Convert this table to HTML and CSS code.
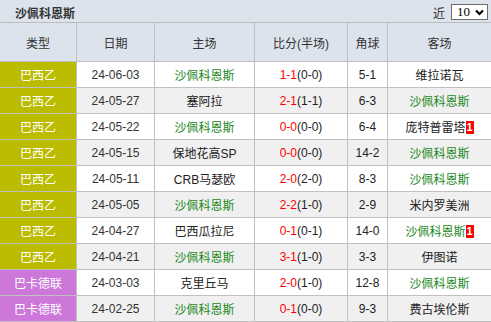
FILE: index.html
```html
<!DOCTYPE html>
<html lang="zh">
<head>
<meta charset="utf-8">
<link rel="stylesheet" href="styles.css">
</head>
<body>
<div class="panel">
  <div class="titlebar">
    <span class="title">沙佩科恩斯</span>
    <span class="recent">近
      <span class="sel">10<svg class="chev" width="9" height="7" viewBox="0 0 9 7"><path d="M1 1.5 L4.5 5 L8 1.5" fill="none" stroke="#000" stroke-width="2.2"/></svg></span>
    </span>
  </div>
  <table class="games">
    <thead>
      <tr>
        <th class="c1">类型</th><th class="c2">日期</th><th class="c3">主场</th><th class="c4">比分(半场)</th><th class="c5">角球</th><th class="c6">客场</th>
      </tr>
    </thead>
    <tbody>
      <tr><td class="lg b">巴西乙</td><td class="d">24-06-03</td><td class="g">沙佩科恩斯</td><td><span class="s">1-1</span>(0-0)</td><td>5-1</td><td>维拉诺瓦</td></tr>
      <tr class="alt"><td class="lg b">巴西乙</td><td class="d">24-05-27</td><td>塞阿拉</td><td><span class="s">2-1</span>(1-1)</td><td>6-3</td><td class="g">沙佩科恩斯</td></tr>
      <tr><td class="lg b">巴西乙</td><td class="d">24-05-22</td><td class="g">沙佩科恩斯</td><td><span class="s">0-0</span>(0-0)</td><td>6-4</td><td>庞特普雷塔<span class="card">1</span></td></tr>
      <tr class="alt"><td class="lg b">巴西乙</td><td class="d">24-05-15</td><td>保地花高SP</td><td><span class="s">0-0</span>(0-0)</td><td>14-2</td><td class="g">沙佩科恩斯</td></tr>
      <tr><td class="lg b">巴西乙</td><td class="d">24-05-11</td><td>CRB马瑟欧</td><td><span class="s">2-0</span>(2-0)</td><td>8-3</td><td class="g">沙佩科恩斯</td></tr>
      <tr class="alt"><td class="lg b">巴西乙</td><td class="d">24-05-05</td><td class="g">沙佩科恩斯</td><td><span class="s">2-2</span>(1-0)</td><td>2-9</td><td>米内罗美洲</td></tr>
      <tr><td class="lg b">巴西乙</td><td class="d">24-04-27</td><td>巴西瓜拉尼</td><td><span class="s">0-1</span>(0-1)</td><td>14-0</td><td class="g">沙佩科恩斯<span class="card">1</span></td></tr>
      <tr class="alt"><td class="lg b">巴西乙</td><td class="d">24-04-21</td><td class="g">沙佩科恩斯</td><td><span class="s">3-1</span>(1-0)</td><td>3-3</td><td>伊图诺</td></tr>
      <tr><td class="lg p">巴卡德联</td><td class="d">24-03-03</td><td>克里丘马</td><td><span class="s">2-0</span>(1-0)</td><td>12-8</td><td class="g">沙佩科恩斯</td></tr>
      <tr class="alt"><td class="lg p">巴卡德联</td><td class="d">24-02-25</td><td class="g">沙佩科恩斯</td><td><span class="s">0-1</span>(0-0)</td><td>9-3</td><td>费古埃伦斯</td></tr>
    </tbody>
  </table>
</div>
</body>
</html>
```
FILE: styles.css
```css
html, body {
  margin: 0;
  padding: 0;
  background: #ffffff;
}
body {
  font-family: "Liberation Sans", "Noto Sans CJK SC", sans-serif;
  font-size: 12px;
  color: #222;
}
.panel {
  width: 491px;
}
.titlebar {
  box-sizing: border-box;
  height: 23px;
  background: #dce3ec;
  border-bottom: 1px solid #bdbdbd;
  display: flex;
  align-items: center;
  justify-content: space-between;
  padding: 2px 3px 0 15px;
}
.title {
  font-weight: bold;
  color: #333;
  font-size: 12px;
}
.recent {
  display: flex;
  align-items: center;
  gap: 6px;
  font-size: 12px;
  color: #333;
}
.sel {
  box-sizing: border-box;
  width: 37px;
  height: 16px;
  background: #fff;
  border: 1px solid #6e6e6e;
  display: flex;
  align-items: center;
  justify-content: space-between;
  padding: 0 3px 0 5px;
  font-family: "Liberation Serif", serif;
  font-size: 13px;
  color: #000;
}
.chev { display: block; }
.games {
  width: 491px;
  table-layout: fixed;
  border-collapse: separate;
  border-spacing: 0;
}
.games th, .games td {
  box-sizing: border-box;
  padding: 0;
  text-align: center;
  border-right: 1px solid #c0c0c0;
  border-bottom: 1px solid #c0c0c0;
  white-space: nowrap;
  overflow: visible;
}
.games th:last-child, .games td:last-child { border-right: none; }
.games th {
  height: 39px;
  background: #dce3ec;
  font-weight: normal;
  color: #333;
}
.c1 { width: 77px; }
.c2 { width: 78px; }
.c3 { width: 100px; }
.c4 { width: 93px; }
.c5 { width: 40px; }
.c6 { width: 103px; }
.games td {
  height: 26px;
  background: #fff;
  color: #222;
}
.games tr.alt td { background: #f0f0f0; }
.games tr td.lg { color: #fff; }
.games tr td.lg.b { background: #bbbb00; }
.games tr td.lg.p { background: #cc77d9; }
.games td.d { color: #333; }
.games td.g { color: #228822; }
.s { color: #ff0000; }
.card {
  display: inline-block;
  background: #ff0000;
  color: #fff;
  font-weight: bold;
  font-size: 11px;
  line-height: 13px;
  width: 8px;
  text-align: center;
  vertical-align: 1px;
}
```
